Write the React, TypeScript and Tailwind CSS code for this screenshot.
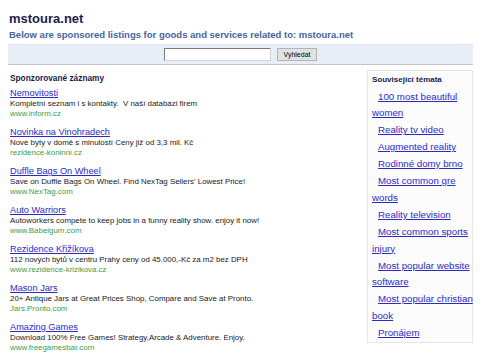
import React from "react";

type Ad = {
  title: string;
  text: string;
  url: string;
};

const ads: Ad[] = [
  {
    title: "Nemovitosti",
    text: "Kompletní seznam i s kontakty.  V naší databázi firem",
    url: "www.inform.cz",
  },
  {
    title: "Novinka na Vinohradech",
    text: "Nové byty v domě s minulostí Ceny již od 3,3 mil. Kč",
    url: "rezidence-koninni.cz",
  },
  {
    title: "Duffle Bags On Wheel",
    text: "Save on Duffle Bags On Wheel. Find NexTag Sellers' Lowest Price!",
    url: "www.NexTag.com",
  },
  {
    title: "Auto Warriors",
    text: "Autoworkers compete to keep jobs in a funny reality show. enjoy it now!",
    url: "www.Babelgum.com",
  },
  {
    title: "Rezidence Křižíkova",
    text: "112 nových bytů v centru Prahy ceny od 45.000,-Kč za m2 bez DPH",
    url: "www.rezidence-krizikova.cz",
  },
  {
    title: "Mason Jars",
    text: "20+ Antique Jars at Great Prices Shop, Compare and Save at Pronto.",
    url: "Jars.Pronto.com",
  },
  {
    title: "Amazing Games",
    text: "Download 100% Free Games! Strategy,Arcade & Adventure. Enjoy.",
    url: "www.freegamesbar.com",
  },
];

// each topic split into its rendered lines
const topics: string[][] = [
  ["100 most beautiful", "women"],
  ["Reality tv video"],
  ["Augmented reality"],
  ["Rodinné domy brno"],
  ["Most common gre", "words"],
  ["Reality television"],
  ["Most common sports", "injury"],
  ["Most popular website", "software"],
  ["Most popular christian", "book"],
  ["Pronájem"],
];

const AdItem: React.FC<{ ad: Ad }> = ({ ad }) => (
  <div className="mb-[7px]">
    <a href="#" className="block text-[9.2px] leading-[12px] text-[#2b2bc4] underline">
      {ad.title}
    </a>
    <div className="text-[7.9px] leading-[10px] text-[#1a1a1a] whitespace-pre">
      {ad.text}
    </div>
    <div className="text-[7.9px] leading-[10px] text-[#3f9b3f]">{ad.url}</div>
  </div>
);

export default function App() {
  return (
    <div className="w-[480px] h-[360px] overflow-hidden bg-white font-['Liberation_Sans',Arial,sans-serif]">
      <div className="pl-[8px] pr-[7px] pt-[11px]">
        <h1 className="pl-px text-[13px] leading-[16px] font-bold text-[#1d1d4f]">
          mstoura.net
        </h1>
        <p className="pl-px mt-[2px] text-[9.5px] leading-[12px] font-bold text-[#46649e]">
          Below are sponsored listings for goods and services related to: mstoura.net
        </p>

        <div className="mt-[3px] h-[21px] flex items-center justify-center gap-[6px] bg-[#e8eef7] border-t border-t-[#dfe5ee] border-b border-b-[#c4c4c4]">
          <input
            className="w-[107px] h-[13px] bg-white border border-t-[#7a7a7a] border-l-[#7a7a7a] border-r-[#d4d4d4] border-b-[#d4d4d4] outline-none"
          />
          <button className="w-[40px] h-[13px] flex items-center justify-center text-[7px] leading-none text-black bg-[#e2e2e2] border border-[#b4b4b4]">
            Vyhledat
          </button>
        </div>

        <div className="mt-[5px] flex">
          <div className="flex-1 pl-[2px] pt-[3px]">
            <div className="text-[8.3px] leading-[10px] font-bold text-[#1b1b4d] mb-[4px]">
              Sponzorované záznamy
            </div>
            {ads.map((ad) => (
              <AdItem key={ad.title} ad={ad} />
            ))}
          </div>

          <div className="w-[106px] h-[273px] border border-[#e6e6e6] bg-[#fcfcfc] pl-[4px] pt-[4px]">
            <div className="text-[8px] leading-[10px] font-bold text-[#1b1b4d] mb-[3.5px]">
              Související témata
            </div>
            {topics.map((lines) => (
              <a
                key={lines[0]}
                href="#"
                className="block text-[9.7px] leading-[16.9px] text-[#2b2bc4] underline whitespace-nowrap"
              >
                {lines.map((line, i) => (
                  <div key={line} className={i === 0 ? "pl-[6px]" : ""}>
                    {line}
                  </div>
                ))}
              </a>
            ))}
          </div>
        </div>
      </div>
    </div>
  );
}
